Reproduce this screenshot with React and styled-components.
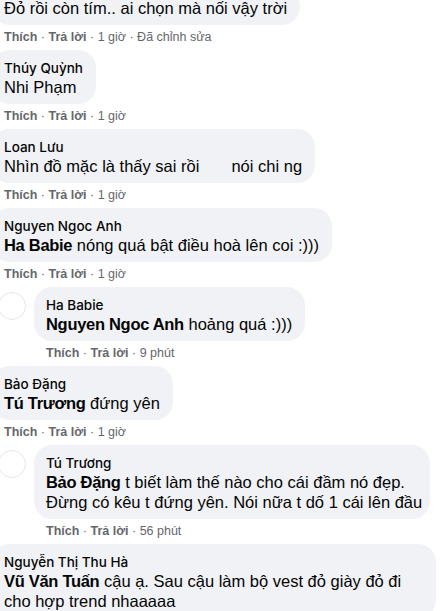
import React from "react";
import styled, { createGlobalStyle } from "styled-components";

const Global = createGlobalStyle`
  html, body {
    margin: 0;
    padding: 0;
    background: #fff;
    overflow: hidden;
  }
  body {
    font-family: "Liberation Sans", Arial, sans-serif;
    color: #050505;
  }
`;

const comments = [
  {
    id: 1,
    name: null,
    lines: ["Đỏ rồi còn tím.. ai chọn mà nối vậy trời"],
    time: "1 giờ",
    edited: true,
  },
  { id: 2, name: "Thúy Quỳnh", lines: ["Nhi Phạm"], time: "1 giờ" },
  { id: 3, name: "Loan Lưu", lines: ["Nhìn đồ mặc là thấy sai rồi \u00a0\u00a0\u00a0\u00a0\u00a0 nói chi ng"], time: "1 giờ" },
  {
    id: 4,
    name: "Nguyen Ngoc Anh",
    mention: "Ha Babie",
    lines: [" nóng quá bật điều hoà lên coi :)))"],
    time: "1 giờ",
  },
  {
    id: 5,
    reply: true,
    name: "Ha Babie",
    mention: "Nguyen Ngoc Anh",
    lines: [" hoảng quá :)))"],
    time: "9 phút",
  },
  { id: 6, name: "Bảo Đặng", mention: "Tú Trương", lines: [" đứng yên"], time: "1 giờ" },
  {
    id: 7,
    reply: true,
    wide: true,
    name: "Tú Trương",
    mention: "Bảo Đặng",
    lines: [" t biết làm thế nào cho cái đầm nó đẹp.", "Đừng có kêu t đứng yên. Nói nữa t dố 1 cái lên đầu"],
    time: "56 phút",
  },
  {
    id: 8,
    wide: true,
    name: "Nguyễn Thị Thu Hà",
    mention: "Vũ Văn Tuấn",
    lines: [" cậu ạ. Sau cậu làm bộ vest đỏ giày đỏ đi", "cho hợp trend nhaaaaa"],
    time: null,
  },
];

export default function App() {
  return (
    <>
      <Global />
      <Thread>
        {comments.map((c) => (
          <Row key={c.id} $reply={c.reply}>
            {c.reply && <Avatar />}
            <Body>
              <Bubble $wide={c.wide} $reply={c.reply}>
                {c.name && <Name>{c.name}</Name>}
                {c.lines.map((line, i) => (
                  <Line key={i}>
                    {i === 0 && c.mention && <Mention>{c.mention}</Mention>}
                    {line}
                  </Line>
                ))}
              </Bubble>
              {c.time && (
                <Meta>
                  <b>Thích</b> · <b>Trả lời</b> · {c.time}
                  {c.edited && " · Đã chỉnh sửa"}
                </Meta>
              )}
            </Body>
          </Row>
        ))}
      </Thread>
    </>
  );
}

const Thread = styled.div`
  display: flex;
  flex-direction: column;
  margin: -11px 0 0 -8px;
`;

const Row = styled.div`
  display: flex;
  align-items: flex-start;
  gap: 8px;
  padding-left: ${({ $reply }) => ($reply ? "6px" : "0")};
`;

const Avatar = styled.div`
  flex: none;
  width: 26px;
  height: 26px;
  margin-top: 5px;
  border-radius: 50%;
  border: 1px solid #e4e6eb;
  background: #fff;
`;

const Body = styled.div`
  display: flex;
  flex-direction: column;
  align-items: flex-start;
  min-width: 0;
`;

const Bubble = styled.div`
  display: inline-block;
  box-sizing: border-box;
  width: ${({ $wide, $reply }) => ($wide ? ($reply ? "396px" : "444px") : "auto")};
  padding: 9px 13px 7px 12px;
  background: #f0f2f5;
  border-radius: 18px;
`;

const Name = styled.div`
  font-family: Inter, "Liberation Sans", sans-serif;
  font-size: 13.5px;
  line-height: 18px;
  font-weight: 500;
  color: #050505;
  white-space: nowrap;
`;

const Line = styled.div`
  font-size: 16.5px;
  line-height: 20px;
  white-space: pre;
  color: #050505;
`;

const Mention = styled.span`
  font-weight: 700;
  letter-spacing: -0.3px;
`;

const Meta = styled.div`
  padding: 4px 0 5px 12px;
  font-size: 12.5px;
  line-height: 16px;
  color: #65676b;
  white-space: nowrap;
  b {
    font-weight: 700;
  }
`;
